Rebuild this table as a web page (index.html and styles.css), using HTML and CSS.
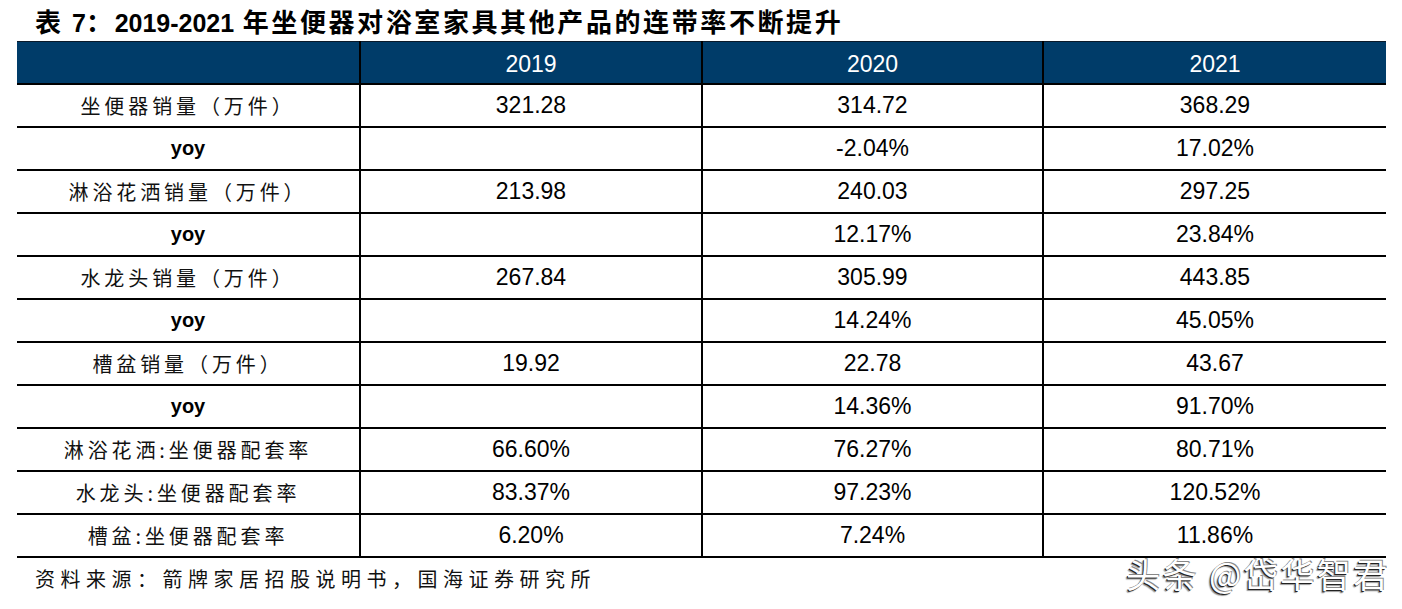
FILE: index.html
```html
<!DOCTYPE html>
<html lang="zh">
<head>
<meta charset="utf-8">
<title>表7</title>
<link rel="stylesheet" href="styles.css">
</head>
<body>
<div class="page">
  <h1 class="title">表 <span class="num">7</span>：<span class="num">2019-2021</span> 年坐便器对浴室家具其他产品的连带率不断提升</h1>
  <table class="data">
    <colgroup>
      <col class="c1"><col class="c2"><col class="c3"><col class="c4">
    </colgroup>
    <thead>
      <tr><th></th><th>2019</th><th>2020</th><th>2021</th></tr>
    </thead>
    <tbody>
      <tr><td class="lbl">坐便器销量（万件）</td><td>321.28</td><td>314.72</td><td>368.29</td></tr>
      <tr><td class="yoy">yoy</td><td></td><td>-2.04%</td><td>17.02%</td></tr>
      <tr><td class="lbl">淋浴花洒销量（万件）</td><td>213.98</td><td>240.03</td><td>297.25</td></tr>
      <tr><td class="yoy">yoy</td><td></td><td>12.17%</td><td>23.84%</td></tr>
      <tr><td class="lbl">水龙头销量（万件）</td><td>267.84</td><td>305.99</td><td>443.85</td></tr>
      <tr><td class="yoy">yoy</td><td></td><td>14.24%</td><td>45.05%</td></tr>
      <tr><td class="lbl">槽盆销量（万件）</td><td>19.92</td><td>22.78</td><td>43.67</td></tr>
      <tr><td class="yoy">yoy</td><td></td><td>14.36%</td><td>91.70%</td></tr>
      <tr><td class="lbl">淋浴花洒:坐便器配套率</td><td>66.60%</td><td>76.27%</td><td>80.71%</td></tr>
      <tr><td class="lbl">水龙头:坐便器配套率</td><td>83.37%</td><td>97.23%</td><td>120.52%</td></tr>
      <tr><td class="lbl">槽盆:坐便器配套率</td><td>6.20%</td><td>7.24%</td><td>11.86%</td></tr>
    </tbody>
  </table>
  <p class="source">资料来源：箭牌家居招股说明书，国海证券研究所</p>
  <div class="watermark">头条 @岱华智君</div>
</div>
</body>
</html>
```

FILE: styles.css
```css
html, body {
  margin: 0;
  padding: 0;
  background: #ffffff;
}

.page {
  position: relative;
  width: 1402px;
  height: 609px;
  overflow: hidden;
  font-family: "Liberation Sans", "Noto Sans CJK SC", sans-serif;
  color: #000;
}

.title {
  margin: 0;
  padding: 0 0 0 35px;
  height: 41px;
  line-height: 41px;
  font-size: 26px;
  font-weight: bold;
  letter-spacing: 2.6px;
  font-family: "Noto Sans CJK SC", sans-serif;
  white-space: nowrap;
}

.title .num {
  font-family: "Liberation Sans", sans-serif;
  letter-spacing: 0;
  font-size: 25px;
}

.data {
  margin-left: 17px;
  border-collapse: collapse;
  table-layout: fixed;
  width: 1369px;
}

.c1 { width: 343px; }
.c2 { width: 342px; }
.c3 { width: 341px; }
.c4 { width: 343px; }

.data th,
.data td {
  padding: 0;
  height: 41px;
  text-align: center;
  vertical-align: middle;
  border-bottom: 2px solid #000;
  border-left: 2px solid #000;
  font-size: 23px;
  font-weight: normal;
  white-space: nowrap;
}

.data th {
  padding-top: 3px;
  height: 38px;
}

.data th:first-child,
.data td:first-child {
  border-left: none;
}

.data thead th {
  background: #003c69;
  color: #fff;
  border-top: 1px solid #0a1a2a;
}

.data td.lbl {
  font-family: "Noto Sans CJK SC", sans-serif;
  font-size: 20px;
  letter-spacing: 3.9px;
  color: #111;
}

.data td.yoy {
  font-weight: bold;
  font-size: 20px;
}

.source {
  margin: 0;
  padding: 7px 0 0 35px;
  font-family: "Noto Sans CJK SC", sans-serif;
  font-size: 20px;
  letter-spacing: 5.5px;
  line-height: 28px;
  color: #111;
}

.watermark {
  position: absolute;
  left: 1126px;
  top: 557px;
  font-family: "Noto Sans CJK SC", sans-serif;
  font-size: 34px;
  letter-spacing: 2.5px;
  line-height: 34px;
  color: #fff;
  text-shadow: -1px 1px 0 #222, 1px -1px 0 #888, -2px 2px 1px rgba(0,0,0,0.4);
  white-space: nowrap;
}
```
